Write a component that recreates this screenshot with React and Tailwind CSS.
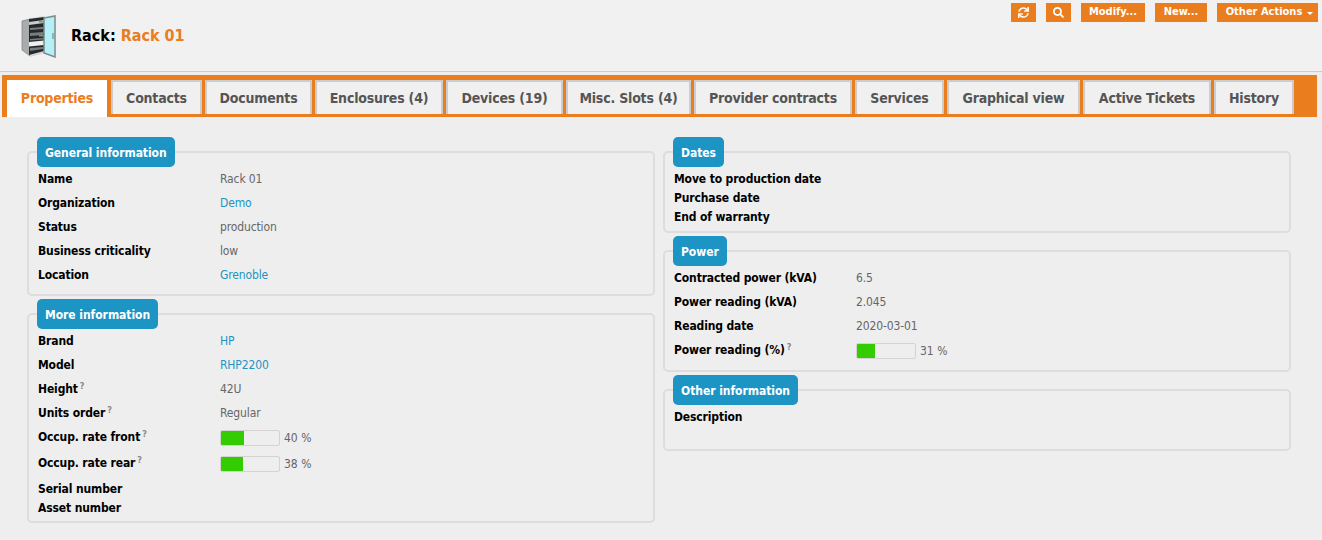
import { FaSync, FaSearch } from "react-icons/fa";

const tabs = [
  { label: "Properties", width: "w-[100px]", active: true },
  { label: "Contacts", width: "w-[91px]" },
  { label: "Documents", width: "w-[107px]" },
  { label: "Enclosures (4)", width: "w-[128px]" },
  { label: "Devices (19)", width: "w-[117px]" },
  { label: "Misc. Slots (4)", width: "w-[125px]" },
  { label: "Provider contracts", width: "w-[158px]" },
  { label: "Services", width: "w-[89px]" },
  { label: "Graphical view", width: "w-[133px]" },
  { label: "Active Tickets", width: "w-[128px]" },
  { label: "History", width: "w-[80px]" },
];

const RackIcon = () => (
  <svg width="35" height="43" viewBox="0 0 35 43" className="shrink-0">
    <path d="M1 6 L9 4 L9 41 L1 35 Z" fill="#a9acad" stroke="#85888a" strokeWidth="0.8" />
    <path d="M9 3 L24 1 L24 38 L9 42 Z" fill="#d6d8d8" />
    <path d="M8 4 L23 2 L23 36 L8 40 Z" fill="#26292c" />
    <path d="M8 7 L23 5 L23 8 L8 10 Z" fill="#c9cbcc" />
    <path d="M9 13 L22 12 L22 14 L9 15 Z M9 18 L22 17 L22 20 L9 21 Z M9 24 L22 23 L22 24.5 L9 25.5 Z M9 33 L22 32 L22 34 L9 36 Z" fill="#7a7d80" />
    <path d="M8 27 L23 25.5 L23 30 L8 31.5 Z" fill="#eef0f0" />
    <path d="M23 3 L34 1 L34 42 L23 38 Z" fill="#b4f0f7" stroke="#7f8a8c" strokeWidth="1.5" />
    <rect x="18" y="6" width="4" height="1.5" fill="#59b14a" />
    <rect x="18" y="20" width="4" height="1.5" fill="#59b14a" />
    <rect x="31.5" y="18" width="1" height="6" fill="#6c7678" />
  </svg>
);

const ActionButton = ({ children, className }) => (
  <button className={`h-[19px] bg-[#ea7d1e] text-white font-bold text-[11px] tracking-normal flex items-center justify-center ${className}`}>
    {children}
  </button>
);

const Hint = () => (
  <span className="text-[9px] text-[#888] font-bold relative -top-[4px] ml-[2px]">?</span>
);

const Gauge = ({ pct, value }) => (
  <div className="flex items-center">
    <div className="w-[60px] h-[16px] border border-[#d3d3d3] rounded-[2px] bg-[#eeeeee] overflow-hidden">
      <div className="h-full bg-[#33cc00]" style={{ width: `${pct}%` }} />
    </div>
    <span className="ml-[4px] text-[#666] tracking-normal">{value}</span>
  </div>
);

const Row = ({ label, hint, value, link, h = "h-[24px]", children, className = "" }) => (
  <div className={`flex items-center ${h} ${className}`}>
    <div className={`w-[182px] shrink-0 font-bold text-black ${children ? "-mt-[2px]" : ""}`}>
      {label}
      {hint && <Hint />}
    </div>
    {value && <div className={link ? "text-[#1c94c4]" : "text-[#666]"}>{value}</div>}
    {children}
  </div>
);

const Box = ({ title, className, children }) => (
  <fieldset className={`border-2 border-[#dddddd] rounded-[5px] pl-[9px] pr-2 ${className}`}>
    <legend className="h-[30px] pt-px px-2 ml-[-1px] bg-[#1c94c4] rounded-[5px] text-white font-bold text-[12px] tracking-[-0.05px] flex items-center">
      {title}
    </legend>
    {children}
  </fieldset>
);

export default function App() {
  return (
    <div className="w-[1322px] h-[540px] overflow-hidden bg-[#eeeeee] text-[12px] tracking-[-0.13px] font-['DejaVu_Sans_Condensed','DejaVu_Sans',sans-serif]">
      {/* HEADER */}
      <div className="h-[72px] bg-[#f1f1f1] border-b border-[#cccccc] flex justify-between pl-[21px] pr-[4px]">
        <div className="flex items-center gap-[15px] pt-[1px]">
          <RackIcon />
          <h1 className="text-[16px] font-bold text-black tracking-normal">
            Rack: <span className="text-[#ea7d1e]">Rack 01</span>
          </h1>
        </div>
        <div className="flex gap-[10px] pt-[3px]">
          <ActionButton className="w-[25px]"><FaSync size={11} /></ActionButton>
          <ActionButton className="w-[25px]"><FaSearch size={11} /></ActionButton>
          <ActionButton className="w-[64px]">Modify...</ActionButton>
          <ActionButton className="w-[52px]">New...</ActionButton>
          <ActionButton className="w-[101px] gap-[5px] pl-[4px]">
            Other Actions
            <span className="border-x-[3px] border-x-transparent border-t-[3px] border-t-white mt-[1px]" />
          </ActionButton>
        </div>
      </div>

      {/* TABS */}
      <div className="mt-[3px] ml-[2px] w-[1315px] h-[42px] bg-[#ea7d1e] flex items-start gap-[3px] pl-[5px] pt-[5px]">
        {tabs.map((tab) => (
          <div
            key={tab.label}
            className={`${tab.width} shrink-0 flex items-center justify-center text-[14px] font-bold tracking-[-0.2px] ${
              tab.active
                ? "h-[37px] bg-white text-[#ea7d1e] mr-[1px]"
                : "h-[34px] bg-[#f0f0f0] text-[#555] border-2 border-b-0 border-[#cccccc]"
            }`}
          >
            {tab.label}
          </div>
        ))}
      </div>

      {/* CONTENT */}
      <div className="grid grid-cols-[628px_628px] gap-[8px] pl-[27px] pt-[20px]">
        <div className="flex flex-col gap-[3px]">
          <Box title="General information" className="h-[159px]">
            <Row label="Name" value="Rack 01" />
            <Row label="Organization" value="Demo" link />
            <Row label="Status" value="production" />
            <Row label="Business criticality" value="low" />
            <Row label="Location" value="Grenoble" link />
          </Box>
          <Box title="More information" className="h-[224px]">
            <Row label="Brand" value="HP" link />
            <Row label="Model" value="RHP2200" link />
            <Row label="Height" hint value="42U" />
            <Row label="Units order" hint value="Regular" />
            <Row label="Occup. rate front" hint h="h-[26px]"><Gauge pct={40} value="40 %" /></Row>
            <Row label="Occup. rate rear" hint h="h-[26px]"><Gauge pct={38} value="38 %" /></Row>
            <Row label="Serial number" h="h-[19px]" className="mt-[2px]" />
            <Row label="Asset number" h="h-[19px]" />
          </Box>
        </div>
        <div className="flex flex-col gap-[3px]">
          <Box title="Dates" className="h-[96px]">
            <Row label="Move to production date" h="h-[19px]" className="mt-[2px]" />
            <Row label="Purchase date" h="h-[19px]" />
            <Row label="End of warranty" h="h-[19px]" />
          </Box>
          <Box title="Power" className="h-[136px]">
            <Row label="Contracted power (kVA)" value="6.5" />
            <Row label="Power reading (kVA)" value="2.045" />
            <Row label="Reading date" value="2020-03-01" />
            <Row label="Power reading (%)" hint h="h-[26px]"><Gauge pct={31} value="31 %" /></Row>
          </Box>
          <Box title="Other information" className="h-[76px]">
            <Row label="Description" h="h-[19px]" className="mt-[2px]" />
          </Box>
        </div>
      </div>
    </div>
  );
}
